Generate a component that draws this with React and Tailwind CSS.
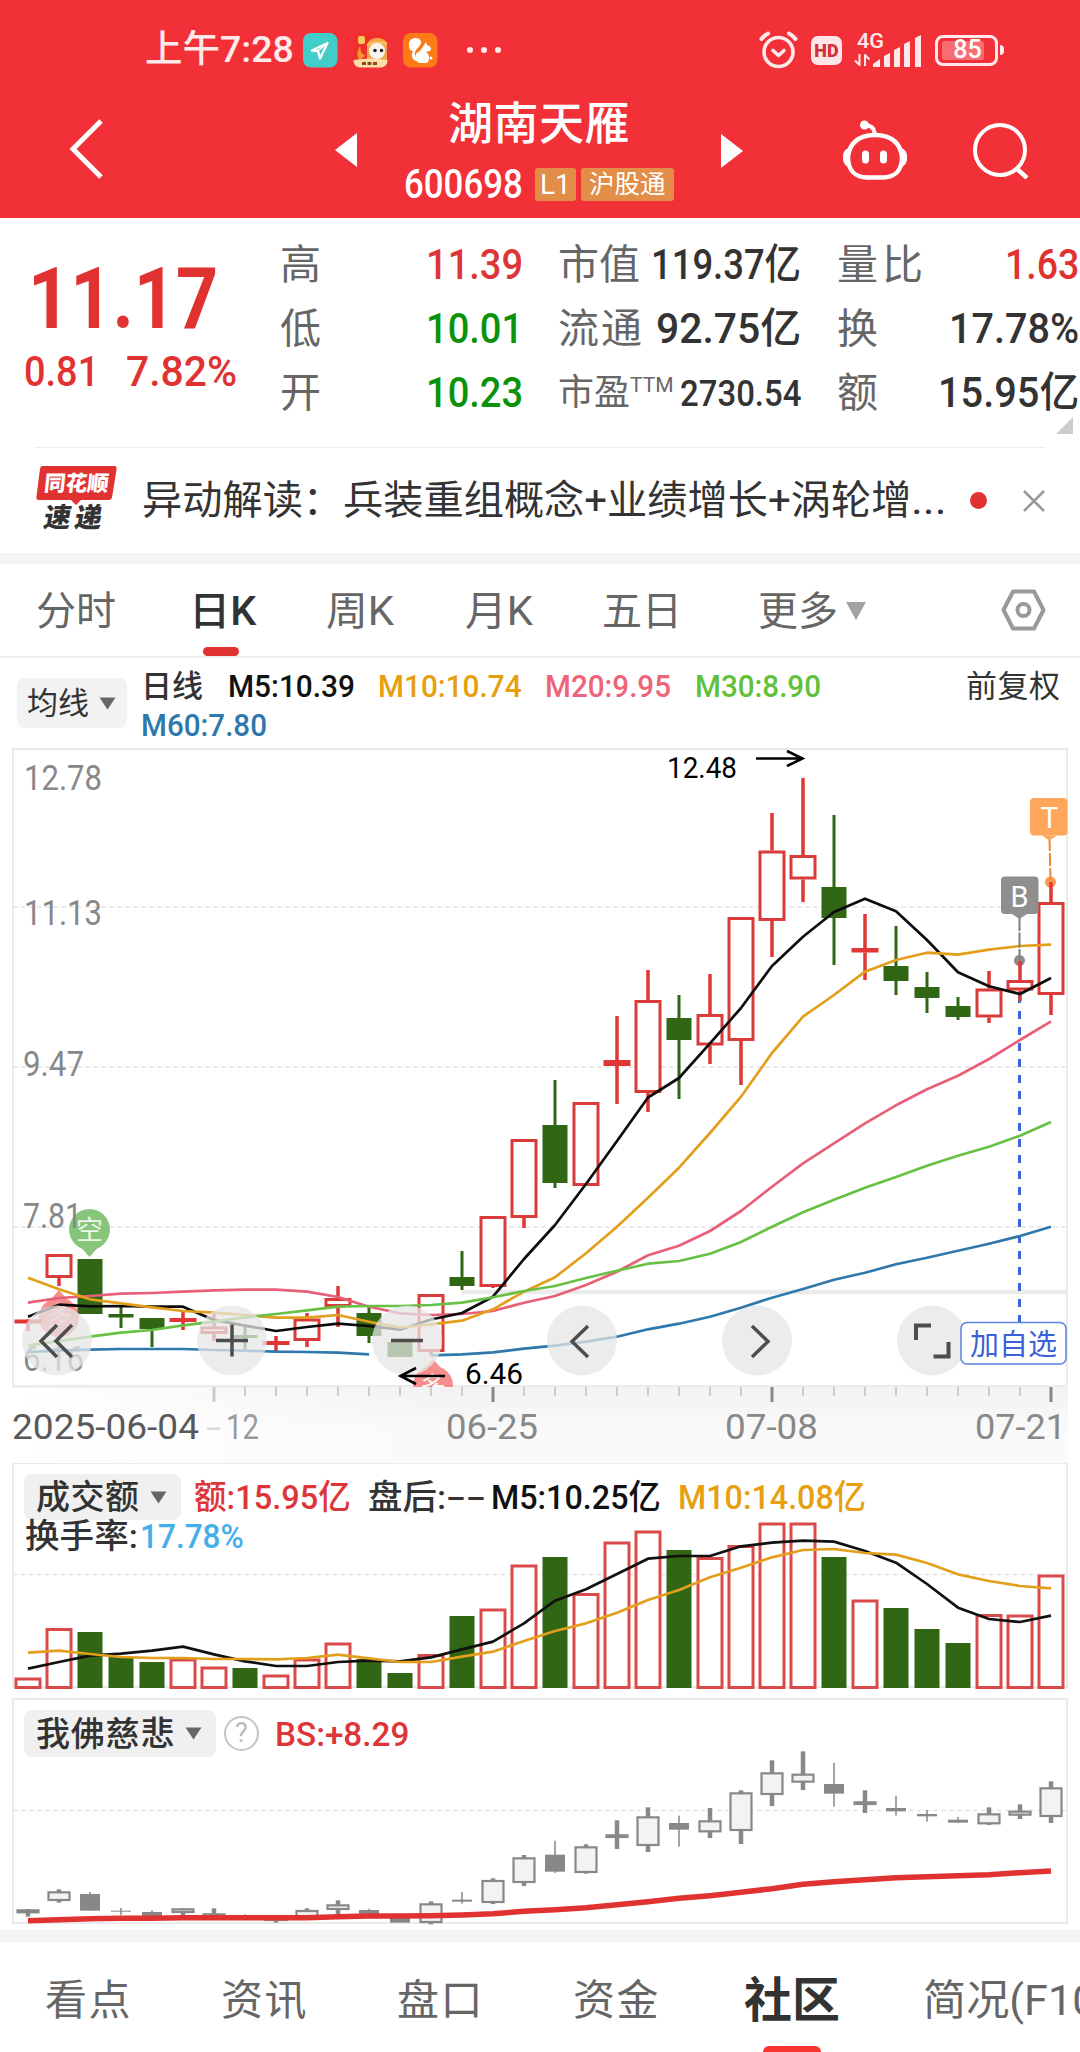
import React, { useLayoutEffect, useRef, useState } from 'react';

const FIRST_X = 28;
const STEP = 31;
const xAt = (i) => FIRST_X + STEP * i;

// [direction, high, bodyTop, bodyBottom, low]
const candles = [
  ['up', 1319, 1319.5, 1323.5, 1331], ['up', 1254, 1254, 1278, 1286], ['down', 1259, 1259, 1314, 1314],
  ['down', 1306, 1314, 1317.5, 1328], ['down', 1318, 1318, 1329, 1347], ['up', 1312, 1318, 1322, 1330],
  ['up', 1314, 1326.5, 1334, 1341], ['down', 1327, 1335, 1338, 1349], ['up', 1336, 1341, 1345, 1351],
  ['up', 1313, 1318.5, 1341, 1347], ['up', 1286, 1298, 1307, 1327], ['down', 1308, 1313, 1336, 1343],
  ['down', 1342, 1342, 1357, 1357], ['up', 1294, 1294, 1352, 1355], ['down', 1251, 1277, 1286, 1290],
  ['up', 1216, 1216, 1287, 1288], ['up', 1139, 1139, 1218, 1228], ['down', 1080, 1125, 1183, 1188],
  ['up', 1102, 1102, 1186, 1186], ['up', 1016, 1060, 1066, 1104], ['up', 970, 1000, 1093, 1112],
  ['down', 995, 1018, 1040, 1099], ['up', 974, 1014, 1045.5, 1064], ['up', 917, 917, 1041, 1085],
  ['up', 813, 850.5, 921, 957], ['up', 778, 855, 879.5, 902], ['down', 815, 887, 918, 965],
  ['up', 914, 948, 952.5, 980], ['down', 926, 966, 981, 995], ['down', 972, 987, 998, 1013],
  ['down', 997, 1006, 1017, 1020], ['up', 971, 988.5, 1017.5, 1023], ['up', 961, 980, 990.5, 1001],
  ['up', 882, 902, 995, 1015],
];

const averages = [
  {
    color: '#2f78ab',
    values: [1352, 1350.7, 1349.7, 1349, 1349, 1349, 1350, 1350.7, 1351.7, 1352, 1352.7, 1354.3, null, 1355.3, 1354.3, 1352.3, 1348.7, 1345.7, 1341.7, 1336.7, 1329.3, 1323.7, 1316.7, 1307.7, 1297.7, 1289, 1279.7, 1272.7, 1264.3, 1257.7, 1250.7, 1243.7, 1236, 1226.7],
  },
  {
    color: '#e85f78',
    values: [1302.7, 1298, 1296, 1293.7, 1293, 1291.7, 1290.3, 1289.7, 1289.7, 1291.7, 1297, 1306.7, 1313.3, 1315, 1314, 1311, 1302.7, 1296, 1285, 1271.7, 1255.3, 1245.7, 1231, 1211, 1186.7, 1163.3, 1143.3, 1123.3, 1105.3, 1089.3, 1075.7, 1059, 1040, 1021.3],
  },
  {
    color: '#0c0c0c',
    values: [1316.7, 1304.7, 1306.3, 1306, 1306.7, 1306.7, 1320, 1325.7, 1331, 1327, 1323.7, 1326, 1329.7, 1319.5, 1313, 1296.7, 1259, 1225, 1184, 1141, 1097.5, 1078, 1043.3, 1008, 966, 936.7, 912, 898.7, 911.3, 940, 972.3, 986.3, 994, 978],
  },
  {
    color: '#e39f1c',
    values: [1277.7, 1289.3, 1299.3, 1303.3, 1307.3, 1311, 1312.7, 1315, 1317.7, 1317.7, 1315, 1321.7, 1327.7, 1324.3, 1320.7, 1309.3, 1291.7, 1277.3, 1253.3, 1226.7, 1197.7, 1167.7, 1133, 1096.7, 1053, 1016.7, 995, 971.7, 960, 952.7, 954.7, 949.7, 946, 944.7],
  },
  {
    color: '#68c045',
    values: [1345.7, 1341, 1336.7, 1332.7, 1330, 1325.3, 1321.7, 1317.3, 1314, 1310.3, 1306.7, 1306, 1306, 1305, 1302.7, 1297.3, 1291, 1286, 1278, 1270.7, 1263.7, 1261, 1253.7, 1242, 1226.7, 1212.3, 1199.7, 1187.7, 1177, 1165.7, 1155.7, 1146.7, 1135.7, 1122],
  },
];

const volumeTops = [1678, 1628.5, 1632, 1657, 1662, 1659, 1667, 1668, 1675, 1659, 1643, 1659, 1673, 1654.5, 1616, 1609, 1565, 1557, 1593.5, 1542, 1531, 1550, 1557.5, 1545.5, 1523, 1523, 1557, 1600, 1608, 1629, 1643, 1614.5, 1615, 1575];
const volumeM5 = [656, 636, 617, 611, 602, 590, 613, 634, 648, 648, 636, 632, 634, 622, 598, 575, 520, 452, 418, 372, 326, 318, 318, 289, 278, 272, 275, 303, 338, 402, 473, 507, 516, 497].map((v) => 1450 + v / 3);
const volumeM10 = [608, 602, 612, 621, 624, 624, 627, 627, 628, 624, 614, 625, 636, 636, 620, 605, 573, 543, 520, 488, 450, 420, 382, 353, 322, 300, 297, 309, 314, 339, 373, 393, 408, 415].map((v) => 1450 + v / 3);

const indicator = [
  ['up', 657, 658, 670, 680], ['up', 598, 604, 633, 638], ['down', 606, 612, 662, 662], ['down', 654, 662, 665, 675],
  ['down', 660, 666, 680, 682], ['up', 655, 655, 669, 685], ['up', 655, 670, 680, 685], ['down', 673, 680, 683, 690],
  ['up', 684, 684, 692, 698], ['up', 655, 660, 686, 690], ['up', 631, 643, 660, 685], ['down', 656, 660, 674, 676],
  ['down', 680, 684, 698, 698], ['up', 634, 640, 699, 703], ['down', 606, 629, 635, 641], ['up', 565, 570, 639, 642],
  ['up', 495, 502, 579, 588], ['down', 452, 494, 545, 549], ['up', 463, 469, 549, 551], ['up', 391, 433, 444, 477],
  ['up', 352, 379, 468, 486], ['down', 377, 399, 419, 470], ['up', 354, 391, 427, 444], ['up', 301, 307, 423, 462],
  ['up', 211, 247, 315, 348], ['up', 184, 251, 278, 300], ['down', 218, 282, 311, 350], ['up', 301, 334, 345, 369],
  ['down', 318, 354, 364, 377], ['down', 360, 372, 379, 395], ['down', 381, 389, 398, 398], ['up', 352, 370, 403, 405],
  ['up', 343, 362, 377, 387], ['up', 274, 292, 381, 399],
].map(([dir, ...v]) => [dir, ...v.map((n) => 1690 + n / 3)]);
const indicatorLine = [692, 689, 686, 685, 685, 683, 683, 683, 683, 683, 680, 678, 678, 677, 675, 671, 664, 659, 653, 644, 635, 625, 617, 607, 596, 583, 575, 569, 563, 560, 557, 554, 548, 543].map((v) => 1690 + v / 3);

const linePath = (values) => {
  let pen = 'M';
  return values
    .map((v, i) => {
      if (v === null) {
        pen = 'M';
        return '';
      }
      const part = `${pen}${xAt(i)} ${v}`;
      pen = 'L';
      return part;
    })
    .join('');
};

const Fit = ({ w, className = '', children }) => {
  const ref = useRef(null);
  const [scale, setScale] = useState(1);
  useLayoutEffect(() => {
    setScale(w / ref.current.offsetWidth);
  }, [w]);
  return (
    <span className={`block shrink-0 whitespace-nowrap ${className}`} style={{ width: w }}>
      <span ref={ref} className="inline-block origin-left" style={{ transform: `scaleX(${scale})` }}>
        {children}
      </span>
    </span>
  );
};

const Caret = ({ className = '' }) => (
  <svg className={`h-[13px] w-[17px] shrink-0 ${className}`} viewBox="0 0 17 13">
    <path d="M0.5 0.5h16L8.5 12.5z" fill="currentColor" />
  </svg>
);

const StatusBar = () => (
  <div className="flex h-[100px] items-center pl-[145px] text-white/90">
    <Fit w={149} className="text-[37px] font-medium">上午7:28</Fit>
    <svg className="ml-[9px] h-9 w-[135px] shrink-0" viewBox="0 0 135 36">
      <rect x="0" y="1" width="34.5" height="34.5" rx="8" fill="#41cdc9" />
      <path d="M9 18.5L24.5 11 17 26.5l-2-7.5z" fill="none" stroke="#fff" strokeWidth="2.4" strokeLinejoin="round" />
      <path d="M15 19l7-6" stroke="#fff" strokeWidth="1.5" />
      <rect x="50" y="1" width="34.5" height="34.5" rx="8" fill="#ee2f2c" />
      <path d="M64 13c1-8 16-10 20-2v17H64z" fill="#f6a14c" />
      <path d="M64 13q9-5 20-1" stroke="#fbc466" strokeWidth="2" fill="none" />
      <path d="M57 14c-3 5-4 11 0 14l5-4-4-4z" fill="#f4952f" />
      <rect x="55" y="4" width="7" height="8" rx="2" fill="#f9c75a" />
      <circle cx="74" cy="19" r="8" fill="#f7f5f0" />
      <circle cx="72" cy="18.500" r="1.800" fill="#222" />
      <circle cx="78.500" cy="18.500" r="1.800" fill="#222" />
      <path d="M50.500 28q17-3 34 0c0 5-3 7.500-8 7.500H58c-5 0-7.500-2.500-7.500-7.500z" fill="#fae0a8" />
      <path d="M59 31.500h16" stroke="#8b4a1a" strokeWidth="3" strokeDasharray="4 1.500" />
      <rect x="100" y="1" width="34.500" height="34.500" rx="8" fill="#fd7a17" />
      <path d="M106 13c-1-8 10-9 12-4 1 4-3 6-5 9-3 4 0 9 3 11-6 1-9-5-6-10-3 0-4-3-4-6z" fill="#fff" />
      <path d="M119 16l4-6 1 3c4 1 5 4 3 6l-4 1c4 3 4 8 1 11h-8c-5-3-5-10 1-12z" fill="#fff" />
      <circle cx="128" cy="26" r="1.500" fill="#fff" />
    </svg>
    <div className="ml-[29px] flex gap-2">
      <span className="size-[6px] rounded-full bg-current" />
      <span className="size-[6px] rounded-full bg-current" />
      <span className="size-[6px] rounded-full bg-current" />
    </div>
    <svg className="ml-auto h-10 w-10" viewBox="0 0 40 40" fill="none" stroke="currentColor" strokeWidth="3.600" strokeLinecap="round">
      <circle cx="19.500" cy="22" r="14.500" />
      <path d="M14 20.500l5.500 5 5.500-5" strokeLinejoin="round" />
      <path d="M2.500 9Q5 5.500 9 3.500M36.500 9Q34 5.500 30 3.500" strokeWidth="4" />
    </svg>
    <span className="ml-3 flex h-[29px] w-[31px] items-center justify-center rounded-[7px] bg-[#fee5e7] text-[18px] font-black text-[#d4303a]">
      HD
    </span>
    <div className="ml-[12px] flex h-[34px] w-[67px] shrink-0">
      <div className="w-[19px]">
        <Fit w={27} className="ml-[3px] text-[20px] leading-[17px] font-medium">4G</Fit>
        <svg className="mt-[4px] h-3 w-[17px]" viewBox="0 0 17 12" fill="none" stroke="currentColor" strokeWidth="2">
          <path d="M1 6.500L5.500 11V0M11 12V1l4.500 4.500" />
        </svg>
      </div>
      <svg className="h-[34px] w-12" viewBox="0 0 48 34" fill="currentColor">
        <path d="M0 34v-3l7-5v8zM11 34V23l6-3v14zM21 34V17l6-3v20zM31 34V11l6-3v26zM42 34V5l6-3v32z" />
      </svg>
    </div>
    <div className="ml-[14px] flex h-[31px] w-[63px] items-center rounded-[8px] border-[3px] border-current pl-1">
      <span className="flex h-[19px] w-[42px] items-center justify-center rounded-[3px] bg-white/30 pl-[9px] text-[25px] font-medium text-white">85</span>
    </div>
    <span className="ml-[2px] mr-[76px] h-[10px] w-1 rounded-r bg-current" />
  </div>
);

const TitleBar = () => (
  <div className="flex h-[118px] text-white">
    <svg className="mt-[19px] ml-[69px] h-[60px] w-[34px] shrink-0" viewBox="0 0 34 60">
      <path d="M32 2L4 30l28 28" fill="none" stroke="currentColor" strokeWidth="5" />
    </svg>
    <svg className="mt-[33px] ml-[232px] h-[34px] w-[22px] shrink-0" viewBox="0 0 22 34">
      <path d="M22 0v34L0 17z" fill="currentColor" />
    </svg>
    <div className="ml-[47px] w-[270px]">
      <div className="pt-px pl-[44px] text-[45px] leading-[48px] font-medium tracking-[0.5px]">湖南天雁</div>
      <div className="mt-[19px] flex h-[33px] items-center">
        <Fit w={119} className="text-[41px] leading-[33px] font-medium">600698</Fit>
        <span className="ml-[12px] flex h-[33px] w-[41px] items-center justify-center rounded-[3px] bg-[#e28d48] text-[28px] leading-none">L1</span>
        <span className="ml-[5px] flex h-[33px] w-[94px] items-center justify-center rounded-[3px] bg-[#e28d48] text-[25.500px] leading-none">沪股通</span>
      </div>
    </div>
    <svg className="mt-[34px] ml-[47px] h-[34px] w-[22px] shrink-0" viewBox="0 0 22 34">
      <path d="M0 0v34l22-17z" fill="currentColor" />
    </svg>
    <svg className="mt-[20px] ml-[100px] h-[60px] w-16 shrink-0" viewBox="0 0 64 60" fill="none" stroke="currentColor">
      <path d="M32 15C14 15 6 25 5 37c0 14 8 20.500 19 20.500h16C51 57.500 59 51 59 37 58 25 50 15 32 15z" strokeWidth="4.500" />
      <path d="M22 5c5 0 9 3 10 9" strokeWidth="4" />
      <circle cx="21.500" cy="5" r="4.500" fill="currentColor" stroke="none" />
      <path d="M4.500 29C-1 31-1 43 4 46zM59.500 29c5.500 2 5.500 14 .5 17z" fill="currentColor" strokeWidth="1" />
      <path d="M22.500 34v6M40.500 34v6" strokeWidth="7" strokeLinecap="round" />
    </svg>
    <svg className="mt-[22px] ml-[66px] h-[57px] w-[57px] shrink-0" viewBox="0 0 57 57" fill="none" stroke="currentColor" strokeWidth="4">
      <circle cx="27" cy="28" r="25" />
      <path d="M43 46l11 10" strokeWidth="4.500" />
    </svg>
  </div>
);

const Stat = ({ label, w, color = 'text-[#333]', size = 'text-[42px]', children }) => (
  <div className="flex h-16 items-center justify-between">
    <span className="flex text-[41px] leading-none text-[#666]">{label}</span>
    <Fit w={w} className={`leading-none font-medium ${size} ${color}`}>{children}</Fit>
  </div>
);

const Quote = () => (
  <div className="relative flex h-[229px] pt-[15px]">
    <div className="w-[280px] pt-[20px] text-[#e13232]">
      <Fit w={190} className="ml-[28px] text-[86px] leading-[92px] font-bold">11.17</Fit>
      <div className="mt-[6px] ml-6 flex text-[42px] leading-[42px] font-medium">
        <Fit w={75}>0.81</Fit>
        <Fit w={111} className="ml-[27px]">7.82%</Fit>
      </div>
    </div>
    <div className="w-[243px]">
      <Stat label="高" w={97} color="text-[#dd3538]">11.39</Stat>
      <Stat label="低" w={97} color="text-[#0a930a]">10.01</Stat>
      <Stat label="开" w={97} color="text-[#0a930a]">10.23</Stat>
    </div>
    <div className="ml-[35px] w-[243px]">
      <Stat label="市值" w={150}>119.37亿</Stat>
      <Stat label={<span className="tracking-[2px]">流通</span>} w={145}>92.75亿</Stat>
      <Stat
        label={<><span className="text-[36px]">市盈</span><span className="text-[21px]">TTM</span></>}
        w={121}
        size="text-[37px]"
      >
        2730.54
      </Stat>
    </div>
    <div className="ml-9 w-[242px]">
      <Stat label={<span className="tracking-[4px]">量比</span>} w={74} color="text-[#e13232]">1.63</Stat>
      <Stat label="换" w={130}>17.78%</Stat>
      <Stat label="额" w={141}>15.95亿</Stat>
    </div>
    <svg className="absolute right-[7px] bottom-[13px] size-[17px]" viewBox="0 0 17 17">
      <path d="M17 0v17H0z" fill="#ccc" />
    </svg>
  </div>
);

const News = () => (
  <div className="flex h-[105px] items-center">
    <div className="relative ml-9 w-[81px] shrink-0">
      <svg className="absolute inset-x-0 -top-px h-10 w-[81px]" viewBox="0 0 81 40">
        <path d="M6 0h72q3 0 2.600 3l-4.500 28q-.5 3-3.500 3H45l-5 5-5-5H3q-3 0-2.600-3L4 3q.5-3 2-3z" fill="#e13232" />
      </svg>
      <div className="relative -skew-x-6 text-center text-[21.500px] leading-[34px] font-black text-white">同花顺</div>
      <div className="-skew-x-10 pl-2 text-[27px] leading-[34px] font-black tracking-[4px] text-[#333]">速递</div>
    </div>
    <div className="ml-[25px] flex w-[806px] text-[40px] leading-[58px] text-[#333]">
      <Fit w={769}>异动解读：兵装重组概念+业绩增长+涡轮增</Fit>
      <Fit w={36}>...</Fit>
    </div>
    <span className="ml-[22px] size-[17px] rounded-full bg-[#e13232]" />
    <svg className="ml-9 size-[22px]" viewBox="0 0 22 22">
      <path d="M1 1l20 20M21 1L1 21" stroke="#999" strokeWidth="2.600" />
    </svg>
  </div>
);

const PeriodTabs = () => (
  <div className="flex h-[94px] border-b-2 border-[#ececec] pl-9 text-[40px] leading-[95px] text-[#666]">
    <span className="w-[153px]">分时</span>
    <div className="relative w-[137px] font-medium text-[#333]">
      <Fit w={67}>日K</Fit>
      <span className="absolute bottom-0 left-[14px] h-[9px] w-9 rounded-full bg-[#e13232]" />
    </div>
    <Fit w={68} className="mr-[71px]">周K</Fit>
    <Fit w={68} className="mr-[69px]">月K</Fit>
    <span className="w-[156px]">五日</span>
    <span className="w-[88px]">更多</span>
    <svg className="mt-[38px] h-[18px] w-5" viewBox="0 0 20 18">
      <path d="M0 0h20L10 18z" fill="#a3a3a3" />
    </svg>
    <svg className="mt-[25px] mr-[34px] ml-auto h-[42px] w-[45px]" viewBox="0 0 45 42" fill="none" stroke="#999" strokeWidth="4">
      <path d="M12 2.500h21L42.500 21 33 39.500H12L2.500 21z" strokeLinejoin="round" />
      <circle cx="22.500" cy="21" r="6" />
    </svg>
  </div>
);

const AverageLegend = () => (
  <div className="flex h-[90px] text-[31px] leading-[39px] text-[#333]">
    <div className="mt-5 ml-[17px] flex h-[50px] w-[110px] items-center justify-between rounded-lg bg-[#f2f2f2] pr-[11px] pl-[10px]">
      <span>均线</span>
      <Caret className="text-[#666]" />
    </div>
    <div className="ml-[14px] flex w-[731px] flex-wrap content-start pt-[9px] font-medium">
      <span className="mr-6 w-[63px]">日线</span>
      <Fit w={127} className="mr-[23px] text-[#111]">M5:10.39</Fit>
      <Fit w={144} className="mr-[23px] text-[#e6a00f]">M10:10.74</Fit>
      <Fit w={126} className="mr-6 text-[#ee6479]">M20:9.95</Fit>
      <Fit w={126} className="text-[#62c13b]">M30:8.90</Fit>
      <Fit w={126} className="text-[#2f78ab]">M60:7.80</Fit>
    </div>
    <span className="mt-[9px] ml-[94px] tracking-[0.5px]">前复权</span>
  </div>
);

const AxisText = ({ x, y, w, children, fill = '#888', size = 35, ...rest }) => (
  <text x={x} y={y} textLength={w} lengthAdjust="spacingAndGlyphs" fontSize={size} fill={fill} {...rest}>
    {children}
  </text>
);

const Candle = ({ i, data }) => {
  const [dir, high, top, bottom, low] = data;
  const x = xAt(i);
  if (dir === 'down') {
    return (
      <g fill="#306614">
        <rect x={x - 1.5} y={high} width="3" height={low - high} />
        <rect x={x - 12.5} y={top} width="25" height={bottom - top} />
      </g>
    );
  }
  const flat = bottom - top < 7;
  return (
    <g fill="#e03636">
      <rect x={x - 1.75} y={high} width="3.5" height={top - high} />
      <rect x={x - 1.75} y={bottom} width="3.5" height={low - bottom} />
      {flat ? (
        <rect x={x - 13.5} y={top} width="27" height={bottom - top} />
      ) : (
        <rect x={x - 12} y={top + 1.5} width="24" height={bottom - top - 3} fill="#fff" stroke="#d93a3a" strokeWidth="3" />
      )}
    </g>
  );
};

const RoundButton = ({ cx, children }) => (
  <g>
    <circle cx={cx} cy="1340.500" r="35" fill="#e6e6e6" fillOpacity="0.750" />
    <g fill="none" stroke="#4d4d4d" strokeWidth="3.500">{children}</g>
  </g>
);

const PriceChart = () => (
  <svg className="block h-[715px] w-[1080px]" viewBox="0 748 1080 715">
    <defs>
      <linearGradient id="axisShade" x1="0" y1="0" x2="0" y2="1">
        <stop offset="0" stopColor="#f2f2f2" />
        <stop offset="0.600" stopColor="#fafafa" />
        <stop offset="1" stopColor="#fafafa" />
      </linearGradient>
      <linearGradient id="axisFade" x1="0" y1="0" x2="1" y2="0">
        <stop offset="0" stopColor="#fff" />
        <stop offset="1" stopColor="#fff" stopOpacity="0" />
      </linearGradient>
      <clipPath id="priceClip">
        <rect x="13" y="748" width="1055" height="639" />
      </clipPath>
    </defs>
    <rect x="13" y="1386" width="1055" height="77" fill="url(#axisShade)" />
    <rect x="13" y="1388" width="420" height="75" fill="url(#axisFade)" />
    <rect x="13" y="749" width="1054" height="637" fill="#fff" stroke="#ebebeb" strokeWidth="2" />
    {[907, 1067, 1227].map((y) => (
      <path key={y} d={`M13 ${y}H1066`} stroke="#e2e2e2" strokeWidth="1.500" strokeDasharray="4.500 3.500" />
    ))}
    <path d="M462 1292H1067" stroke="#ebebeb" strokeWidth="4.500" />

    <g clipPath="url(#priceClip)">
      <path d="M59 1290l8 9a20 20 0 1 1-16 0z" fill="#f88d8d" />
      <text x="59" y="1325" textAnchor="middle" fontSize="26" fill="#fbc4c4">多</text>
      <path d="M433 1359l7 8a20 20 0 1 1-14 0z" fill="#f88d8d" />
      <text x="433" y="1396" textAnchor="middle" fontSize="26" fill="#fff">多</text>
      <circle cx="89.500" cy="1229.500" r="20.500" fill="#87c67a" />
      <path d="M79 1245h21l-10.500 12z" fill="#87c67a" />
      <text x="89.500" y="1240" textAnchor="middle" fontSize="27" fill="#fff" fillOpacity="0.850">空</text>
    </g>
    <AxisText x={24} y={790} w={78}>12.78</AxisText>
    <AxisText x={24} y={925} w={78}>11.13</AxisText>
    <AxisText x={23} y={1076} w={61}>9.47</AxisText>
    <AxisText x={23} y={1228} w={59}>7.81</AxisText>
    <AxisText x={23} y={1371} w={61}>6.16</AxisText>

    <path d="M1019.500 995V1322" stroke="#3a66d8" strokeWidth="3" strokeDasharray="8 8" />
    <circle cx="1050.500" cy="882" r="5.500" fill="#fa9a50" />
    <circle cx="1019.500" cy="960.500" r="5.500" fill="#8c8c8c" />
    {candles.map((c, i) => (
      <Candle key={i} i={i} data={c} />
    ))}
    {averages.map((a) => (
      <path key={a.color} d={linePath(a.values)} fill="none" stroke={a.color} strokeWidth="2.700" strokeLinejoin="round" />
    ))}

    <path d="M1019.500 916V960" stroke="#7d7d7d" strokeWidth="2" strokeDasharray="15 1.500" />
    <path d="M1049.500 838L1050.500 880" stroke="#e88a30" strokeWidth="2" strokeDasharray="13 2" />
    <rect x="1001" y="876.500" width="37.500" height="37.500" rx="4" fill="#8f8f8f" />
    <path d="M1012 914h15l-7.500 5z" fill="#8f8f8f" />
    <rect x="1030" y="798" width="37.500" height="37.500" rx="4" fill="#fea65a" />
    <path d="M1042 835.500h15l-7.500 5z" fill="#fea65a" />
    <text x="1019.500" y="906.500" textAnchor="middle" fontSize="29" fill="#fff">B</text>
    <text x="1049.500" y="828" textAnchor="middle" fontSize="30" fill="#fff">T</text>

    <AxisText x={667} y={778} w={70} size={30} fill="#000">12.48</AxisText>
    <path d="M756 758.500H802M787 751l15.500 7.500-15.500 7.500" fill="none" stroke="#000" strokeWidth="2.600" />

    <RoundButton cx={57}><path d="M57 1325l-16 16 16 16M72 1325l-16 16 16 16" /></RoundButton>
    <RoundButton cx={232}><path d="M216 1340.500h32M232 1324.500v32" /></RoundButton>
    <RoundButton cx={407}><path d="M391 1340.500h32" /></RoundButton>
    <RoundButton cx={582}><path d="M588 1326l-16 15.500 16 15.500" /></RoundButton>
    <RoundButton cx={757}><path d="M752 1326l16 15.500-16 15.500" /></RoundButton>
    <RoundButton cx={932}><path d="M916 1340v-14.500h15M948.500 1342v14.500h-15" strokeWidth="4" /></RoundButton>

    <path d="M445 1376H401M416 1368l-15.500 8 15.500 8" fill="none" stroke="#000" strokeWidth="2.600" />
    <AxisText x={465} y={1384} w={58} size={30} fill="#000">6.46</AxisText>

    <rect x="961" y="1322.500" width="105" height="41.500" rx="6" fill="#fff" fillOpacity="0.900" stroke="#5b80e4" strokeWidth="1.500" />
    <AxisText x={970} y={1355} w={87} size={29} fill="#3b62d6">加自选</AxisText>

    {candles.map((_, i) => {
      if (i < 6) return null;
      const major = i === 6 || i === 15 || i === 24 || i === 33;
      return (
        <rect
          key={i}
          x={xAt(i) - (major ? 1.5 : 1)}
          y="1387"
          width={major ? 3 : 2}
          height={major ? 15 : 9}
          fill={major && i > 6 ? '#888' : '#ccc'}
        />
      );
    })}
    <AxisText x={12} y={1439} w={187} fill="#595959">2025-06-04</AxisText>
    <AxisText x={206} y={1439} w={15} fill="#d9d9d9">-</AxisText>
    <AxisText x={226} y={1439} w={33} fill="#9a9a9a">12</AxisText>
    <AxisText x={446} y={1439} w={92}>06-25</AxisText>
    <AxisText x={725} y={1439} w={93}>07-08</AxisText>
    <AxisText x={975} y={1439} w={91}>07-21</AxisText>
  </svg>
);

const VolumePanel = () => (
  <div className="relative h-[235px]">
    <svg className="absolute inset-0 h-[235px] w-[1080px]" viewBox="0 1463 1080 235">
      <rect x="13" y="1463" width="1054" height="224" fill="#fff" stroke="#ebebeb" strokeWidth="2" />
      <path d="M13 1574.500H1066" stroke="#e2e2e2" strokeWidth="1.500" strokeDasharray="4.500 3.500" />
      {volumeTops.map((top, i) =>
        candles[i][0] === 'up' ? (
          <rect key={i} x={xAt(i) - 12} y={top + 1} width="24" height={1686.5 - top} fill="#fff" stroke="#db4a4a" strokeWidth="3" />
        ) : (
          <rect key={i} x={xAt(i) - 12.5} y={top} width="25" height={1688 - top} fill="#306614" />
        )
      )}
      <path d={linePath(volumeM5)} fill="none" stroke="#111" strokeWidth="2.700" strokeLinejoin="round" />
      <path d={linePath(volumeM10)} fill="none" stroke="#e39f1c" strokeWidth="2.700" strokeLinejoin="round" />
    </svg>
    <div className="relative flex pt-[11px] pl-6 text-[34px] leading-[46px] font-medium text-[#333]">
      <div className="flex h-[46px] w-[157px] items-center justify-between rounded-lg bg-[#f0f0f0] pr-[14px] pl-3">
        <span className="tracking-[0.5px]">成交额</span>
        <Caret className="text-[#666]" />
      </div>
      <Fit w={157} className="ml-[13px] text-[#dd3538]">额:15.95亿</Fit>
      <Fit w={78} className="ml-[17px]">盘后:</Fit>
      <Fit w={40}>--</Fit>
      <Fit w={170} className="ml-[5px] text-[#111]">M5:10.25亿</Fit>
      <Fit w={188} className="ml-[17px] text-[#e6a00f]">M10:14.08亿</Fit>
    </div>
    <div className="relative flex pl-[25px] text-[34px] leading-[32px] font-medium text-[#333]">
      <Fit w={113}>换手率:</Fit>
      <Fit w={104} className="ml-[2px] text-[#45aeea]">17.78%</Fit>
    </div>
  </div>
);

const IndicatorPanel = () => (
  <div className="relative h-[232px]">
    <svg className="absolute inset-0 h-[232px] w-[1080px]" viewBox="0 1698 1080 232">
      <rect x="13" y="1699" width="1054" height="224" fill="#fff" stroke="#ebebeb" strokeWidth="2" />
      <path d="M13 1810.500H1066" stroke="#e2e2e2" strokeWidth="1.500" strokeDasharray="4.500 3.500" />
      {indicator.map(([dir, high, top, bottom, low], i) => {
        const x = xAt(i);
        return dir === 'up' ? (
          <g key={i} fill="#888">
            <rect x={x - 10.5} y={top + 1} width="21" height={Math.max(bottom - top - 2, 1)} fill="#f3f3f3" stroke="#888" strokeWidth="2.200" />
            <rect x={x - 2.25} y={high} width="4.500" height={top - high + 1.5} />
            <rect x={x - 2.25} y={bottom - 1.5} width="4.500" height={low - bottom + 1.5} />
          </g>
        ) : (
          <g key={i} fill="#888">
            <rect x={x - 0.75} y={high} width="1.500" height={low - high} />
            <rect x={x - 10} y={top} width="20" height={bottom - top} />
          </g>
        );
      })}
      <path d={linePath(indicatorLine)} fill="none" stroke="#e13232" strokeWidth="5.500" />
    </svg>
    <div className="relative flex items-center pt-3 pl-6 text-[34px] leading-[46px] font-medium text-[#333]">
      <div className="flex h-[47px] w-[192px] items-center justify-between rounded-lg bg-[#f0f0f0] pr-[14px] pl-3">
        <span className="tracking-[0.8px]">我佛慈悲</span>
        <Caret className="text-[#666]" />
      </div>
      <span className="ml-2 flex size-[35px] items-center justify-center rounded-full border-[2.500px] border-[#c4c4c4] text-[27px] leading-none font-normal text-[#bbb]">?</span>
      <Fit w={134} className="ml-4 text-[#dd3538]">BS:+8.29</Fit>
    </div>
  </div>
);

const BottomTabs = () => (
  <div className="flex h-[110px] overflow-hidden pl-[45px] text-[42px] leading-[118px] whitespace-nowrap text-[#666]">
    {['看点', '资讯', '盘口', '资金'].map((tab) => (
      <span key={tab} className="w-[176px] shrink-0 tracking-[1.500px]">{tab}</span>
    ))}
    <div className="relative -ml-[5px] w-[179px] shrink-0 text-[48px] font-bold text-[#333]">
      社区
      <span className="absolute bottom-[-1px] left-[19px] h-[7px] w-[58px] rounded-t-md bg-[#f9352f]" />
    </div>
    <Fit w={188}>简况(F10)</Fit>
  </div>
);

const App = () => (
  <div className="h-[2052px] w-[1080px] overflow-hidden bg-white font-[Roboto,'Noto_Sans_CJK_SC',sans-serif]">
    <header className="h-[218px] bg-[#f23038]">
      <StatusBar />
      <TitleBar />
    </header>
    <Quote />
    <div className="mr-[35px] ml-[35px] h-px bg-[#eee]" />
    <News />
    <div className="h-[11px] bg-[#f4f4f4]" />
    <PeriodTabs />
    <AverageLegend />
    <PriceChart />
    <VolumePanel />
    <IndicatorPanel />
    <div className="h-3 bg-[#f3f3f3]" />
    <BottomTabs />
  </div>
);

export default App;
